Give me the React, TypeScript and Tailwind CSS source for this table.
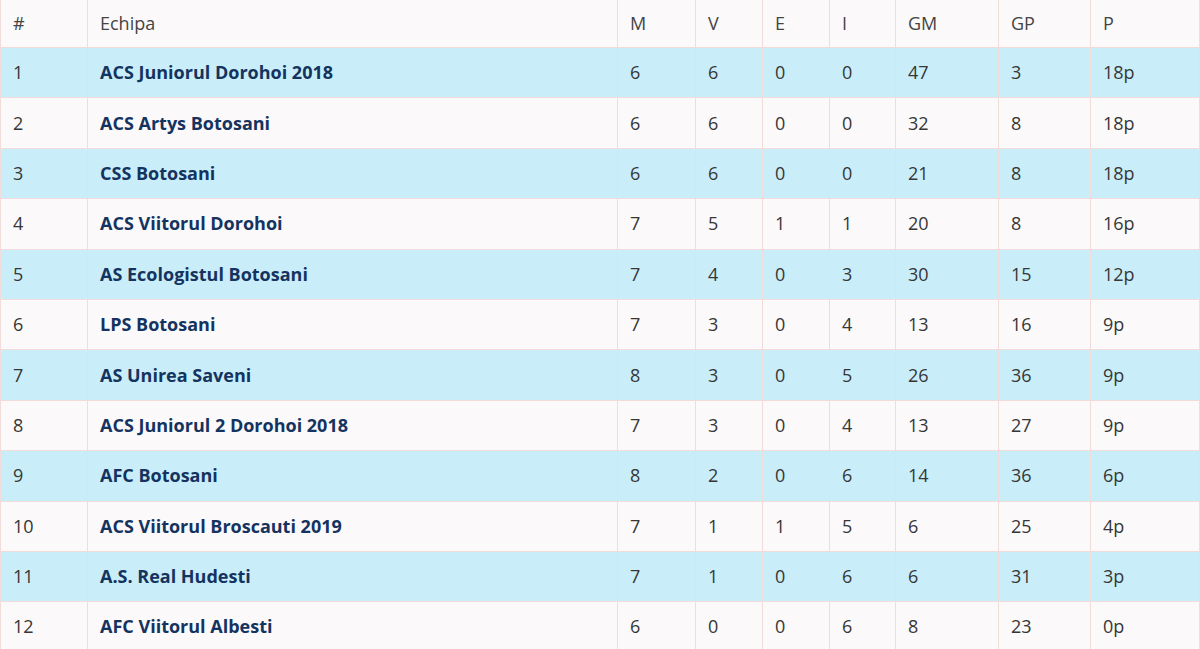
import React from 'react';

type Row = [number, string, number, number, number, number, number, number, string];

const rows: Row[] = [
  [1, 'ACS Juniorul Dorohoi 2018', 6, 6, 0, 0, 47, 3, '18p'],
  [2, 'ACS Artys Botosani', 6, 6, 0, 0, 32, 8, '18p'],
  [3, 'CSS Botosani', 6, 6, 0, 0, 21, 8, '18p'],
  [4, 'ACS Viitorul Dorohoi', 7, 5, 1, 1, 20, 8, '16p'],
  [5, 'AS Ecologistul Botosani', 7, 4, 0, 3, 30, 15, '12p'],
  [6, 'LPS Botosani', 7, 3, 0, 4, 13, 16, '9p'],
  [7, 'AS Unirea Saveni', 8, 3, 0, 5, 26, 36, '9p'],
  [8, 'ACS Juniorul 2 Dorohoi 2018', 7, 3, 0, 4, 13, 27, '9p'],
  [9, 'AFC Botosani', 8, 2, 0, 6, 14, 36, '6p'],
  [10, 'ACS Viitorul Broscauti 2019', 7, 1, 1, 5, 6, 25, '4p'],
  [11, 'A.S. Real Hudesti', 7, 1, 0, 6, 6, 31, '3p'],
  [12, 'AFC Viitorul Albesti', 6, 0, 0, 6, 8, 23, '0p'],
];

const headers = ['#', 'Echipa', 'M', 'V', 'E', 'I', 'GM', 'GP', 'P'];

const gridCols = 'grid grid-cols-[87px_530px_78px_67px_67px_66px_103px_92px_1fr]';

export default function App() {
  return (
    <div className="w-[1200px] h-[649px] overflow-hidden bg-[#fbf9fa] font-['Open_Sans',sans-serif] text-[18px] text-[#363636]">
      <div className="border-r border-[#f1dcdc]">
        <div className={`${gridCols} h-[47px] bg-[#fbf9fa] text-[#444]`}>
          {headers.map((h) => (
            <div key={h} className="flex items-center pl-3 border-l border-[#f1dcdc]">
              {h}
            </div>
          ))}
        </div>
        {rows.map((r, idx) => (
          <div
            key={r[0]}
            className={`${gridCols} h-[50.4px] border-t border-[#f1dcdc] ${idx % 2 === 0 ? 'bg-[#c9eefa]' : 'bg-[#fbf9fa]'}`}
          >
            {r.map((c, i) => (
              <div
                key={i}
                className={`flex items-center pl-3 border-l border-[#f1dcdc] ${i === 1 ? 'font-bold text-[#14335f]' : ''}`}
              >
                {c}
              </div>
            ))}
          </div>
        ))}
      </div>
    </div>
  );
}
